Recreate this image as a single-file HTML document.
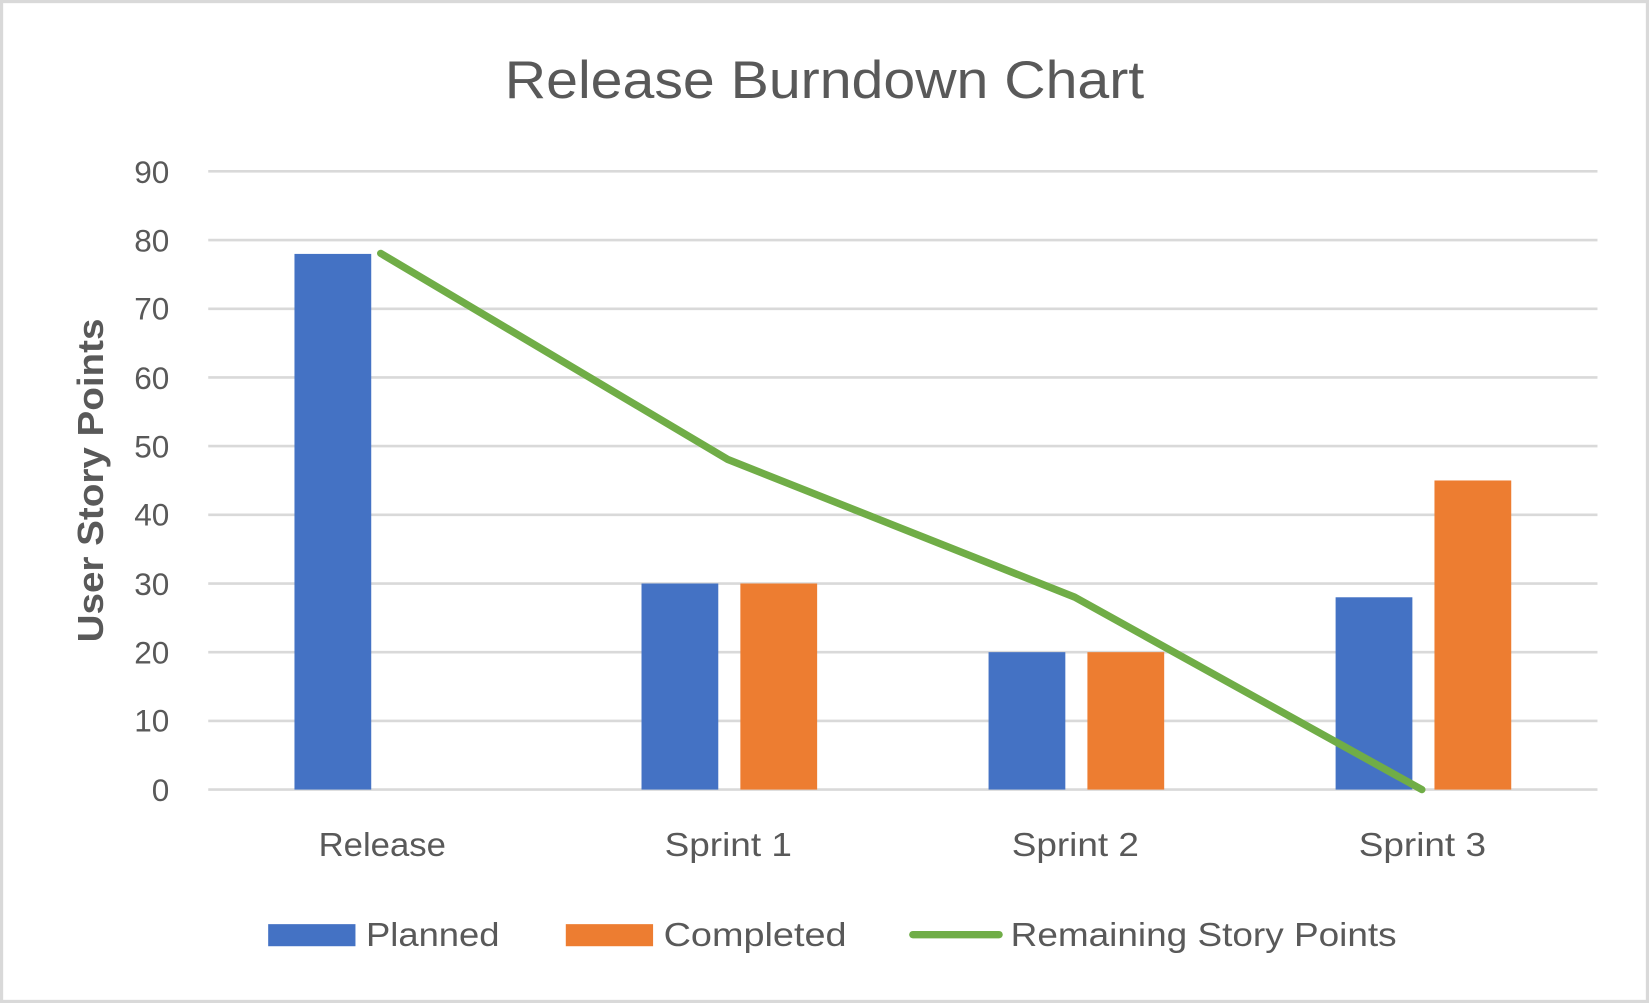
<!DOCTYPE html>
<html><head><meta charset="utf-8"><style>
html,body{margin:0;padding:0;background:#fff;}
svg{display:block;width:1649px;height:1003px;}
text{font-family:"Liberation Sans",sans-serif;fill:#595959;}
</style></head><body>
<svg viewBox="0 0 1568 954" preserveAspectRatio="none" xmlns="http://www.w3.org/2000/svg">
<rect x="1.5" y="1.5" width="1565" height="951" fill="#fff" stroke="#d9d9d9" stroke-width="3"/>
<text x="480" y="93" font-size="50" textLength="608" lengthAdjust="spacingAndGlyphs">Release Burndown Chart</text>
<g stroke="#d9d9d9" stroke-width="2.5">
<line x1="198" x2="1519" y1="163" y2="163"/>
<line x1="198" x2="1519" y1="228.3" y2="228.3"/>
<line x1="198" x2="1519" y1="293.7" y2="293.7"/>
<line x1="198" x2="1519" y1="359" y2="359"/>
<line x1="198" x2="1519" y1="424.3" y2="424.3"/>
<line x1="198" x2="1519" y1="489.7" y2="489.7"/>
<line x1="198" x2="1519" y1="555" y2="555"/>
<line x1="198" x2="1519" y1="620.3" y2="620.3"/>
<line x1="198" x2="1519" y1="685.7" y2="685.7"/>
<line x1="198" x2="1519" y1="751" y2="751"/>
</g>
<g font-size="30" text-anchor="end">
<text x="161" y="174">90</text>
<text x="161" y="239">80</text>
<text x="161" y="304">70</text>
<text x="161" y="370">60</text>
<text x="161" y="435">50</text>
<text x="161" y="500">40</text>
<text x="161" y="566">30</text>
<text x="161" y="631">20</text>
<text x="161" y="696">10</text>
<text x="161" y="762">0</text>
</g>
<text transform="translate(98,611) rotate(-90)" font-size="34" font-weight="bold" textLength="308" lengthAdjust="spacingAndGlyphs">User Story Points</text>
<g fill="#4472C4">
<rect x="280" y="241.5" width="73" height="509.5"/>
<rect x="610" y="555" width="73" height="196"/>
<rect x="940" y="620.3" width="73" height="130.7"/>
<rect x="1270" y="568.1" width="73" height="182.9"/>
</g>
<g fill="#ED7D31">
<rect x="704" y="555" width="73" height="196"/>
<rect x="1034" y="620.3" width="73" height="130.7"/>
<rect x="1364" y="457" width="73" height="294"/>
</g>
<polyline points="362,241 692,437 1022,568 1352,751" fill="none" stroke="#70AD47" stroke-width="7" stroke-linecap="round" stroke-linejoin="round"/>
<g font-size="32" lengthAdjust="spacingAndGlyphs">
<text x="303" y="814" textLength="121" lengthAdjust="spacingAndGlyphs">Release</text>
<text x="632" y="814" textLength="121" lengthAdjust="spacingAndGlyphs">Sprint 1</text>
<text x="962" y="814" textLength="121" lengthAdjust="spacingAndGlyphs">Sprint 2</text>
<text x="1292" y="814" textLength="121" lengthAdjust="spacingAndGlyphs">Sprint 3</text>
</g>
<rect x="255" y="879" width="83" height="21" fill="#4472C4"/>
<rect x="538" y="879" width="83" height="21" fill="#ED7D31"/>
<line x1="868" x2="950" y1="889" y2="889" stroke="#70AD47" stroke-width="7" stroke-linecap="round"/>
<g font-size="32">
<text x="348" y="900" textLength="127" lengthAdjust="spacingAndGlyphs">Planned</text>
<text x="631" y="900" textLength="174" lengthAdjust="spacingAndGlyphs">Completed</text>
<text x="961" y="900" textLength="367" lengthAdjust="spacingAndGlyphs">Remaining Story Points</text>
</g>
</svg>
</body></html>
